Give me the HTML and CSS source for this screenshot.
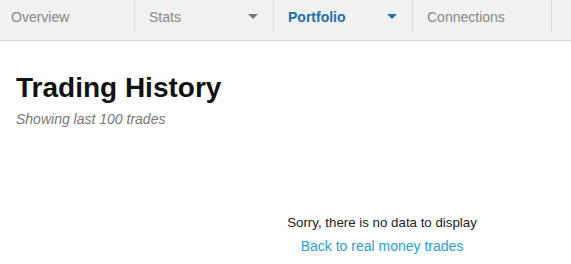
FILE: index.html
```html
<!DOCTYPE html>
<html>
<head>
<meta charset="utf-8">
<link rel="stylesheet" href="styles.css">
</head>
<body>
<nav class="tabs">
  <div class="tab first">Overview</div>
  <div class="tab">Stats<span class="caret"></span></div>
  <div class="tab active">Portfolio<span class="caret"></span></div>
  <div class="tab">Connections</div>
</nav>
<main class="content">
  <h1 class="title">Trading History</h1>
  <p class="subtitle">Showing last 100 trades</p>
  <div class="empty">
    <p class="empty-msg">Sorry, there is no data to display</p>
    <a class="empty-link" href="#">Back to real money trades</a>
  </div>
</main>
</body>
</html>
```
FILE: styles.css
```css
html, body {
  margin: 0;
  padding: 0;
  background: #fff;
  font-family: "Liberation Sans", Arial, sans-serif;
}
.tabs {
  display: flex;
  height: 40px;
  background: #f1f1f1;
  border-bottom: 1px solid #d6d6d6;
}
.tab {
  position: relative;
  width: 139px;
  box-sizing: border-box;
  padding: 9px 0 0 14px;
  font-size: 14px;
  color: #888;
  height: 32px;
  border-right: 1px solid #dcdcdc;
}
.tab.first { padding-left: 11px; width: 135px; }
.tab.active { color: #1f70a8; font-weight: bold; }
.caret {
  position: absolute;
  right: 15px;
  top: 14px;
  width: 0;
  height: 0;
  border-left: 5px solid transparent;
  border-right: 5px solid transparent;
  border-top: 5px solid #777;
}
.tab.active .caret { border-top-color: #1f70a8; }
.content {
  padding: 0 16px;
}
.title {
  margin: 31px 0 0;
  font-size: 28px;
  line-height: 32px;
  font-weight: bold;
  color: #111;
}
.subtitle {
  margin: 6px 0 0;
  font-size: 14px;
  line-height: 18px;
  font-style: italic;
  color: #777;
}
.empty {
  margin-top: 87px;
  padding-left: 193px;
  display: flex;
  flex-direction: column;
  align-items: center;
}
.empty-msg {
  margin: 0;
  font-size: 13.3px;
  line-height: 16px;
  color: #222;
}
.empty-link {
  margin-top: 7px;
  font-size: 14px;
  line-height: 17px;
  color: #2a9fd6;
  text-decoration: none;
}
```
